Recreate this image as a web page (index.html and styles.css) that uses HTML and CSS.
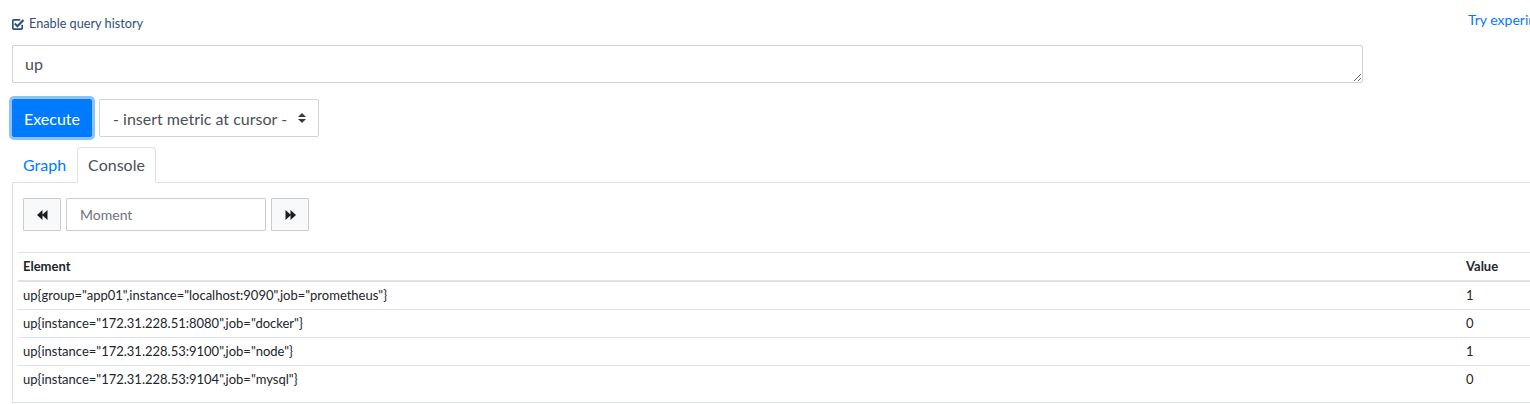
FILE: index.html
```html
<!DOCTYPE html>
<html>
<head>
<meta charset="utf-8">
<link rel="stylesheet" href="styles.css">
</head>
<body>
<div class="page">
  <div class="top-row">
    <label class="history">
      <svg class="check-icon" width="12" height="12" viewBox="0 0 12 12"><path d="M10.2 6.8V10a1.2 1.2 0 0 1-1.2 1.2H2A1.2 1.2 0 0 1 0.8 10V3A1.2 1.2 0 0 1 2 1.8h6.2" fill="none" stroke="#2f5078" stroke-width="1.7"/><path d="M2.8 5.6l2.6 2.6L11.4 2" fill="none" stroke="#2f5078" stroke-width="2.1"/></svg>
      <span>Enable query history</span>
    </label>
    <a class="react-link" href="#">Try experimental React UI</a>
  </div>
  <textarea class="expr">up</textarea>
  <div class="controls">
    <button class="btn-exec">Execute</button>
    <div class="metric-select">
      <span>- insert metric at cursor -</span>
      <svg width="8" height="10" viewBox="0 0 8 10"><path d="M0 4h8L4 0z M0 6h8L4 10z" fill="#343a40"/></svg>
    </div>
  </div>
  <div class="tabs">
    <a class="tab" href="#">Graph</a>
    <a class="tab active" href="#">Console</a>
  </div>
  <div class="tab-content">
    <div class="moment-row">
      <button class="nav-btn"><svg width="11" height="10" viewBox="0 0 11 10"><path d="M0 5L5.5 0v10z M5 5L10.5 0v10z" fill="#1b1e21"/></svg></button>
      <input class="moment" type="text" placeholder="Moment">
      <button class="nav-btn"><svg width="11" height="10" viewBox="0 0 11 10"><path d="M11 5L5.5 0v10z M6 5L0.5 0v10z" fill="#1b1e21"/></svg></button>
    </div>
    <table class="data-table">
      <thead>
        <tr><th>Element</th><th class="val">Value</th></tr>
      </thead>
      <tbody>
        <tr><td>up{group="app01",instance="localhost:9090",job="prometheus"}</td><td class="val">1</td></tr>
        <tr><td>up{instance="172.31.228.51:8080",job="docker"}</td><td class="val">0</td></tr>
        <tr><td>up{instance="172.31.228.53:9100",job="node"}</td><td class="val">1</td></tr>
        <tr><td>up{instance="172.31.228.53:9104",job="mysql"}</td><td class="val">0</td></tr>
      </tbody>
    </table>
  </div>
</div>
</body>
</html>
```

FILE: styles.css
```css
html, body {
  margin: 0;
  overflow: hidden;
}
body {
  font-family: Lato, "Open Sans", sans-serif;
  color: #212529;
  background: #fff;
}
.page {
  width: 1556px;
  padding-left: 12px;
}
.top-row {
  display: grid;
  grid-template-columns: 1456px auto;
  padding-top: 13px;
  height: 20px;
}
.history {
  display: flex;
  align-items: center;
  gap: 5px;
  font-size: 12.7px;
  line-height: 20px;
  color: #2f5078;
  white-space: nowrap;
}
.check-icon {
  flex: none;
  margin-top: 1px;
}
.react-link {
  font-size: 14px;
  line-height: 20px;
  margin-top: -3px;
  color: #007bff;
  text-decoration: none;
  white-space: nowrap;
}
.expr {
  display: block;
  box-sizing: border-box;
  width: 1351px;
  height: 38px;
  margin: 12px 0 0;
  padding: 6px 12px;
  font-family: inherit;
  font-size: 16px;
  line-height: 24px;
  color: #495057;
  border: 1px solid #ced4da;
  border-radius: 2px;
}
.controls {
  display: flex;
  align-items: center;
  gap: 7px;
  margin-top: 16px;
}
.btn-exec {
  box-sizing: border-box;
  width: 80px;
  height: 38px;
  padding: 0;
  font-family: inherit;
  font-size: 16px;
  color: #fff;
  background: #007bff;
  border: 1px solid #007bff;
  border-radius: 2px;
  box-shadow: 0 0 0 3px rgba(0, 123, 255, 0.45);
}
.metric-select {
  box-sizing: border-box;
  width: 220px;
  height: 38px;
  display: flex;
  align-items: center;
  justify-content: space-between;
  padding: 0 12px 0 13px;
  font-size: 16px;
  color: #495057;
  border: 1px solid #ced4da;
  border-radius: 2px;
  white-space: nowrap;
}
.tabs {
  display: flex;
  margin-top: 10px;
  border-bottom: 1px solid #dee2e6;
}
.tab {
  padding: 5px 10px;
  line-height: 24px;
  font-size: 16px;
  color: #007bff;
  text-decoration: none;
  border: 1px solid transparent;
  border-radius: 4px 4px 0 0;
  margin-bottom: -1px;
}
.tab.active {
  color: #495057;
  border-color: #dee2e6 #dee2e6 #fff;
  background: #fff;
}
.tab-content {
  border-left: 1px solid #dee2e6;
  border-bottom: 1px solid #dee2e6;
  padding: 15px 5px 9px 5px;
}
.moment-row {
  display: flex;
  gap: 5px;
  margin-left: 5px;
  height: 33px;
}
.nav-btn {
  box-sizing: border-box;
  width: 38px;
  height: 33px;
  padding: 0;
  display: flex;
  align-items: center;
  justify-content: center;
  background: #f8f9fa;
  border: 1px solid #ccc;
  border-radius: 1px;
}
.moment {
  box-sizing: border-box;
  width: 200px;
  height: 33px;
  padding: 0 13px;
  font-family: inherit;
  font-size: 14px;
  color: #495057;
  border: 1px solid #ccc;
  border-radius: 1px;
  outline: none;
}
.moment::placeholder {
  color: #6c757d;
}
.data-table {
  width: 100%;
  margin-top: 21px;
  border-collapse: separate;
  border-spacing: 0;
  font-size: 13px;
  line-height: 15px;
}
.data-table th,
.data-table td {
  padding: 6px 5px;
  text-align: left;
  white-space: nowrap;
}
.data-table th {
  font-weight: bold;
  border-top: 1px solid #dee2e6;
  border-bottom: 2px solid #dee2e6;
}
.data-table tbody tr + tr td {
  border-top: 1px solid #dee2e6;
}
.data-table .val {
  width: 92px;
}
```
